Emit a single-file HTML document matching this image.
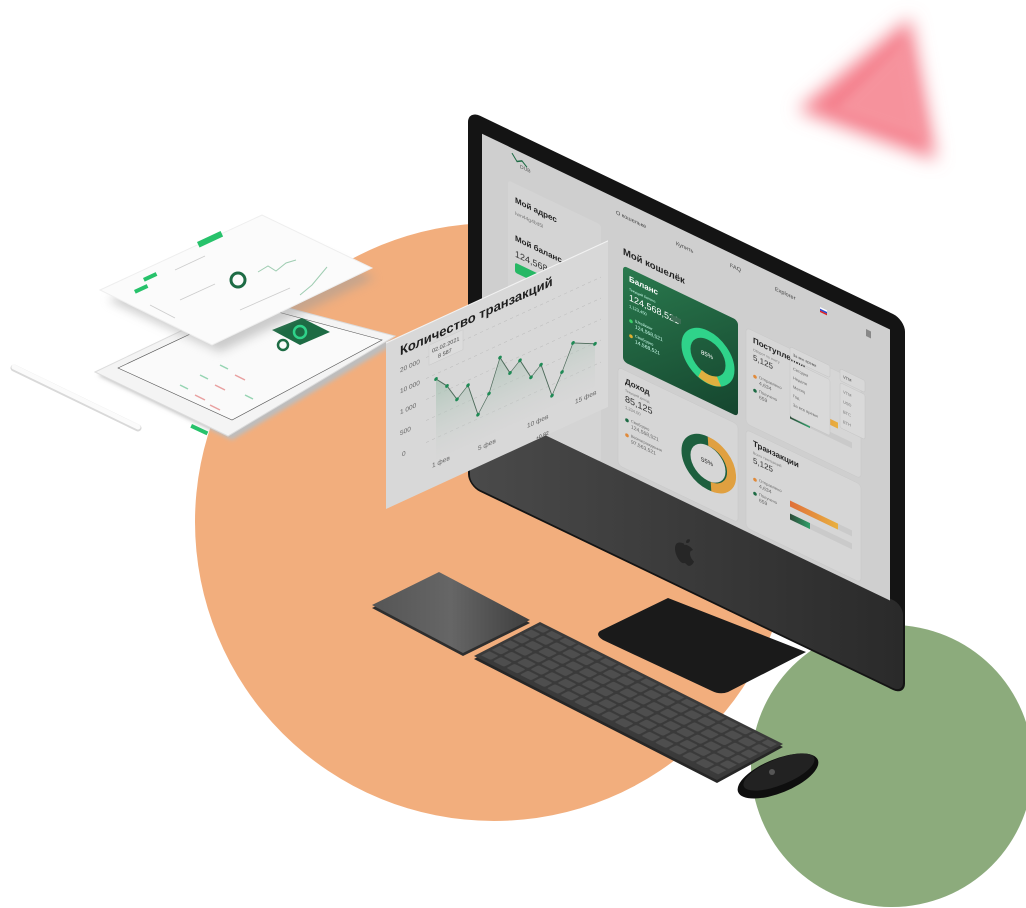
<!DOCTYPE html>
<html><head><meta charset="utf-8"><style>
html,body{margin:0;padding:0;background:#fff;width:1026px;height:908px;overflow:hidden}
svg{display:block}
text{font-family:"Liberation Sans","DejaVu Sans",sans-serif}
</style></head><body>
<svg width="1026" height="908" viewBox="0 0 1026 908" xmlns="http://www.w3.org/2000/svg">
<defs>
<filter id="blur12" x="-50%" y="-50%" width="200%" height="200%"><feGaussianBlur stdDeviation="9"/></filter>
<filter id="blur4" x="-50%" y="-50%" width="200%" height="200%"><feGaussianBlur stdDeviation="5"/></filter>
<filter id="sh" x="-20%" y="-20%" width="140%" height="140%"><feGaussianBlur stdDeviation="2"/></filter>
<linearGradient id="gc" x1="0" y1="0" x2="1" y2="1"><stop offset="0" stop-color="#2a7a4e"/><stop offset="1" stop-color="#15452e"/></linearGradient>
<linearGradient id="chin" x1="0" y1="0" x2="1" y2="0"><stop offset="0" stop-color="#4a4a4a"/><stop offset="0.5" stop-color="#3a3a3a"/><stop offset="1" stop-color="#2a2a2a"/></linearGradient>
<linearGradient id="ob" x1="0" y1="0" x2="1" y2="0"><stop offset="0" stop-color="#e0703a"/><stop offset="1" stop-color="#e8b040"/></linearGradient>
<linearGradient id="gb" x1="0" y1="0" x2="1" y2="0"><stop offset="0" stop-color="#2e4a38"/><stop offset="1" stop-color="#2fa06a"/></linearGradient>
<linearGradient id="tp" x1="0" y1="0" x2="1" y2="0"><stop offset="0" stop-color="#555"/><stop offset="0.5" stop-color="#666"/><stop offset="1" stop-color="#3e3e3e"/></linearGradient>
<linearGradient id="area" x1="0" y1="0" x2="0" y2="1"><stop offset="0" stop-color="#9fbfad" stop-opacity="0.7"/><stop offset="1" stop-color="#d5d5d5" stop-opacity="0.2"/></linearGradient>
<pattern id="keys" width="13.5" height="10.5" patternUnits="userSpaceOnUse"><rect x="1.2" y="1.2" width="11.1" height="8.1" rx="1.5" fill="#4e4e4e"/></pattern>
</defs>

<circle cx="494" cy="522" r="299" fill="#F2AE7D"/>
<circle cx="892" cy="766" r="141" fill="#8CAB7C"/>

<polygon points="798,110 910,18 936,160" fill="#F47F8C" filter="url(#blur12)"/>
<polygon points="835,110 905,40 925,140" fill="#F8A0A8" filter="url(#blur4)" opacity="0.6"/>

<g>
<line x1="14" y1="368" x2="138" y2="428" stroke="#d9d9d9" stroke-width="7" stroke-linecap="round"/>
<line x1="14" y1="367" x2="138" y2="427" stroke="#fbfbfb" stroke-width="5" stroke-linecap="round"/>
</g>

<polygon points="98,375 250,302 398,342 232,440" fill="#bdbdbd" filter="url(#sh)"/>
<polygon points="95,372 250,298 395,336 228,436" fill="#f4f4f4" stroke="#dcdcdc"/>
<polygon points="118,368 252,305 382,340 232,420" fill="#fafafa" stroke="#555" stroke-width="0.6"/>
<polygon points="272,330 302,318 330,332 300,345" fill="#1d6b44"/>
<circle cx="300" cy="332" r="6" fill="none" stroke="#2fd38a" stroke-width="2.5"/>
<circle cx="283" cy="345" r="5" fill="none" stroke="#1d6b44" stroke-width="2.5"/>
<g stroke="#e27b7b" stroke-width="1.5" opacity="0.7">
<line x1="195" y1="395" x2="205" y2="400"/><line x1="215" y1="385" x2="225" y2="390"/><line x1="235" y1="375" x2="245" y2="380"/><line x1="210" y1="405" x2="220" y2="410"/>
</g>
<g stroke="#6cc495" stroke-width="1.5" opacity="0.7">
<line x1="180" y1="385" x2="188" y2="389"/><line x1="200" y1="375" x2="208" y2="379"/><line x1="220" y1="365" x2="228" y2="369"/><line x1="245" y1="395" x2="253" y2="399"/>
</g>
<rect x="192" y="424" width="18" height="4" fill="#27c26b" transform="rotate(25 192 424)"/>

<polygon points="108,300 262,228 375,278 220,352" fill="#9b9b9b" opacity="0.5" filter="url(#blur4)"/>
<polygon points="100,290 262,215 372,268 212,345" fill="#fbfbfb" stroke="#eee"/>
<rect x="197" y="242" width="26" height="6" fill="#27c26b" transform="rotate(-25 197 242)"/>
<rect x="143" y="278" width="14" height="4" fill="#27c26b" transform="rotate(-25 143 278)"/>
<rect x="134" y="290" width="14" height="4" fill="#27c26b" transform="rotate(-25 134 290)"/>
<circle cx="238" cy="280" r="7" fill="none" stroke="#1d6b44" stroke-width="3"/>
<path d="M258 272 l10 -6 l8 5 l10 -8 l10 -3" stroke="#9fcdb2" fill="none"/>
<path d="M300 295 l12 -10 l15 -18" stroke="#9fcdb2" fill="none"/>
<g stroke="#ccc" stroke-width="0.8">
<line x1="175" y1="270" x2="205" y2="256"/><line x1="180" y1="300" x2="215" y2="284"/><line x1="240" y1="310" x2="290" y2="288"/><line x1="150" y1="305" x2="175" y2="318"/>
</g>

<path d="M600,631 L668,598 L806,652 L728,692 Q720,695 712,691 L603,640 Q595,635 600,631 Z" fill="#1a1a1a"/>

<g transform="matrix(1,0.48,0,1,468,110)">
<rect x="0" y="0" width="437" height="376" rx="12" fill="#141414"/>
<rect x="2" y="286" width="433" height="88" rx="10" fill="url(#chin)"/>
<rect x="14" y="17" width="408" height="271" fill="#cfcfcf"/>
<g transform="translate(216,338)">
<path d="M0,-8 C-6,-8 -9,-4 -9,1 C-9,7 -5,12 -2,12 C0,12 0,11 1,11 C2,11 3,12 4,12 C7,12 10,6 10,5 C7,4 6,1 6,-1 C6,-4 8,-5 9,-6 C7,-8 5,-8 3,-8 C2,-8 1,-7 0,-7 Z" fill="#262626"/>
<path d="M2,-10 C2,-13 4,-15 6,-15 C6,-12 4,-10 2,-10Z" fill="#262626"/>
</g>
<path d="M44,22 l5,6 l5,-3 l5,4" stroke="#1d6b44" stroke-width="1.3" fill="none"/>
<text x="52" y="33" font-size="5" fill="#555">DUB</text>
<rect x="40" y="51" width="93" height="237" rx="3" fill="#d4d4d4"/>
<text x="47" y="70" font-size="8" font-weight="bold" fill="#222">Мой адрес</text>
<text x="47" y="82" font-size="5" fill="#777">Iwn44g4bd5l</text>
<text x="47" y="108" font-size="8" font-weight="bold" fill="#222">Мой баланс</text>
<text x="47" y="124" font-size="9" fill="#333">124,568,521</text>
<rect x="47" y="130" width="40" height="10" rx="2" fill="#27b865"/>
<rect x="110" y="95" width="4" height="6" fill="none" stroke="#666" stroke-width="0.8"/>
<text x="148" y="33" font-size="5.5" fill="#444">О кошельке</text>
<text x="208" y="35" font-size="5.5" fill="#444">Купить</text>
<text x="262" y="31" font-size="5.5" fill="#444">FAQ</text>
<text x="307" y="33" font-size="5.5" fill="#444">Explorer</text>
<rect x="352" y="28" width="7" height="1.7" fill="#fff"/><rect x="352" y="29.7" width="7" height="1.7" fill="#2a4bd0"/><rect x="352" y="31.4" width="7" height="1.7" fill="#d22"/>
<rect x="398" y="28" width="5" height="7" fill="#888"/>
<text x="155" y="70" font-size="9.5" font-weight="bold" fill="#222">Мой кошелёк</text>
<rect x="155" y="81" width="115" height="96" rx="4" fill="url(#gc)"/>
<text x="161" y="94" font-size="8" font-weight="bold" fill="#fff">Баланс</text>
<text x="161" y="103" font-size="3.5" fill="#cfe">Текущий баланс</text>
<text x="161" y="113" font-size="9" fill="#fff">124,568,521</text>
<rect x="203" y="107" width="10" height="5" fill="#3d6e55"/>
<text x="161" y="120" font-size="4" fill="#cfe">1,123,450</text>
<circle cx="163" cy="133" r="1.8" fill="#3cd06a"/><text x="167" y="132" font-size="4" fill="#cfe">Штейкинг</text><text x="167" y="138" font-size="5" fill="#cfe">124,568,521</text>
<circle cx="163" cy="148" r="1.8" fill="#e0b030"/><text x="167" y="147" font-size="4" fill="#cfe">Свободно</text><text x="167" y="153" font-size="5" fill="#cfe">14,568,521</text>
<circle cx="240" cy="132" r="22" fill="none" stroke="#2fd38a" stroke-width="9"/>
<path d="M251,151 A22,22 0 0 1 232,152" fill="none" stroke="#e0b040" stroke-width="9"/>
<text x="233" y="132" font-size="6" fill="#fff">85%</text>
<rect x="150" y="185" width="120" height="98" rx="4" fill="#d6d6d6" stroke="#c8c8c8" stroke-width="0.5"/>
<text x="157" y="198" font-size="8" font-weight="bold" fill="#222">Доход</text>
<text x="157" y="206" font-size="3.5" fill="#777">Текущий доход</text>
<text x="157" y="216" font-size="9" fill="#333">85,125</text>
<text x="157" y="223" font-size="4" fill="#777">1,234.00</text>
<circle cx="159" cy="234" r="1.8" fill="#1d6b44"/><text x="163" y="234" font-size="4" fill="#666">Свободно</text><text x="163" y="240" font-size="5" fill="#666">124,568,521</text>
<circle cx="159" cy="249" r="1.8" fill="#e08a3a"/><text x="163" y="249" font-size="4" fill="#666">Вознаграждения</text><text x="163" y="255" font-size="5" fill="#666">97,563,521</text>
<circle cx="240" cy="238" r="22" fill="none" stroke="#1d5f3e" stroke-width="9"/>
<path d="M240,216 A22,22 0 0 1 243,260" fill="none" stroke="#e0a040" stroke-width="9"/>
<text x="233" y="239" font-size="6" fill="#222">55%</text>
<rect x="278" y="84" width="115" height="96" rx="4" fill="#d6d6d6" stroke="#c8c8c8" stroke-width="0.5"/>
<text x="285" y="96" font-size="8" font-weight="bold" fill="#222">Поступления</text>
<text x="285" y="104" font-size="3.5" fill="#777">Оборот по счету</text>
<text x="285" y="113" font-size="8" fill="#333">5,125</text>
<circle cx="287" cy="129" r="1.8" fill="#e08a3a"/><text x="291" y="129" font-size="4" fill="#666">Отправлено</text><text x="291" y="135" font-size="5" fill="#666">4,634</text>
<circle cx="287" cy="143" r="1.8" fill="#1d6b44"/><text x="291" y="143" font-size="4" fill="#666">Получено</text><text x="291" y="149" font-size="5" fill="#666">659</text>
<rect x="322" y="135" width="48" height="6" fill="url(#ob)"/>
<rect x="322" y="148" width="20" height="6" fill="url(#gb)"/>
<rect x="342" y="148" width="42" height="6" fill="#cacaca"/>
<rect x="278" y="186" width="115" height="98" rx="4" fill="#d6d6d6" stroke="#c8c8c8" stroke-width="0.5"/>
<text x="285" y="199" font-size="8" font-weight="bold" fill="#222">Транзакции</text>
<text x="285" y="207" font-size="3.5" fill="#777">Всего транзакций</text>
<text x="285" y="216" font-size="8" fill="#333">5,125</text>
<circle cx="287" cy="232" r="1.8" fill="#e08a3a"/><text x="291" y="232" font-size="4" fill="#666">Отправлено</text><text x="291" y="238" font-size="5" fill="#666">4,634</text>
<circle cx="287" cy="246" r="1.8" fill="#1d6b44"/><text x="291" y="246" font-size="4" fill="#666">Получено</text><text x="291" y="252" font-size="5" fill="#666">659</text>
<rect x="322" y="236" width="48" height="6" fill="url(#ob)"/><rect x="370" y="236" width="14" height="6" fill="#cacaca"/>
<rect x="322" y="249" width="20" height="6" fill="url(#gb)"/><rect x="342" y="249" width="42" height="6" fill="#cacaca"/>
<rect x="322" y="82" width="40" height="12" rx="2" fill="#d8d8d8" stroke="#c4c4c4" stroke-width="0.5"/>
<text x="325" y="90" font-size="3.8" fill="#444">За все время</text>
<rect x="322" y="96" width="40" height="56" rx="2" fill="#d9d9d9" stroke="#c4c4c4" stroke-width="0.5"/>
<text x="325" y="104" font-size="4" fill="#666">Сегодня</text><text x="325" y="113" font-size="4" fill="#666">Неделя</text><text x="325" y="122" font-size="4" fill="#666">Месяц</text><text x="325" y="131" font-size="4" fill="#666">Год</text><text x="325" y="140" font-size="4" fill="#666">За все время</text>
<rect x="372" y="80" width="25" height="12" rx="2" fill="#d8d8d8" stroke="#c4c4c4" stroke-width="0.5"/>
<text x="375" y="88" font-size="4" fill="#444">VTM</text>
<rect x="372" y="94" width="25" height="45" rx="2" fill="#d9d9d9" stroke="#c4c4c4" stroke-width="0.5"/>
<text x="375" y="103" font-size="4" fill="#777">VTM</text><text x="375" y="113" font-size="4" fill="#777">USD</text><text x="375" y="123" font-size="4" fill="#777">BTC</text><text x="375" y="133" font-size="4" fill="#777">ETH</text>
</g>

<g transform="matrix(1,-0.46,0,1,386,343)">
<rect x="0" y="0" width="222" height="166" fill="#d8d8d8"/>
<line x1="0" y1="0" x2="222" y2="0" stroke="#f2f2f2" stroke-width="1.2"/>
<text x="14" y="19" font-size="13" font-weight="bold" fill="#1e1e1e">Количество транзакций</text>
<g stroke="#bdbdbd" stroke-width="0.6" stroke-dasharray="3,3">
<line x1="40" y1="33" x2="215" y2="33"/><line x1="40" y1="54" x2="215" y2="54"/><line x1="40" y1="75" x2="215" y2="75"/><line x1="40" y1="96" x2="215" y2="96"/><line x1="40" y1="118" x2="215" y2="118"/>
</g>
<g font-size="6.5" fill="#666">
<text x="14" y="36">20 000</text><text x="14" y="57">10 000</text><text x="14" y="78">1 000</text><text x="14" y="99">500</text><text x="16" y="121">0</text>
<text x="46" y="146">1 фев</text><text x="92" y="150">5 фев</text><text x="141" y="150">10 фев</text><text x="189" y="148">15 фев</text>
</g>
<rect x="43" y="22" width="34" height="20" fill="#dcdcdc" stroke="#c8c8c8" stroke-width="0.5"/>
<text x="46" y="31" font-size="5.5" fill="#444">02.02.2021</text><text x="52" y="39" font-size="5.5" fill="#444">8 587</text>
<path d="M50,59 L61,71 L71,89 L82,80 L92,114 L103,98 L114,67 L124,87 L134,79 L145,101 L155,93 L166,129 L176,110 L187,86 L209,97 L209,140 L50,140 Z" fill="url(#area)"/>
<polyline points="50,59 61,71 71,89 82,80 92,114 103,98 114,67 124,87 134,79 145,101 155,93 166,129 176,110 187,86 209,97" fill="none" stroke="#4d6a5a" stroke-width="0.8"/>
<g fill="#1f8a55">
<circle cx="50" cy="59" r="1.8"/><circle cx="61" cy="71" r="1.8"/><circle cx="71" cy="89" r="1.8"/><circle cx="82" cy="80" r="1.8"/><circle cx="92" cy="114" r="1.8"/><circle cx="103" cy="98" r="1.8"/><circle cx="114" cy="67" r="1.8"/><circle cx="124" cy="87" r="1.8"/><circle cx="134" cy="79" r="1.8"/><circle cx="145" cy="101" r="1.8"/><circle cx="155" cy="93" r="1.8"/><circle cx="166" cy="129" r="1.8"/><circle cx="176" cy="110" r="1.8"/><circle cx="187" cy="86" r="1.8"/><circle cx="209" cy="97" r="1.8"/>
</g>
<text x="150" y="166" font-size="5" fill="#333">+0.82</text>
</g>

<polygon points="372,608 439,575 530,623 463,656" fill="#2e2e2e"/>
<polygon points="372,605 439,572 530,620 463,653" fill="url(#tp)"/>

<polygon points="474,659 540,625 783,747 717,783" fill="#262626"/>
<polygon points="474,656 540,622 783,744 717,780" fill="#3a3a3a"/>
<g transform="matrix(1,0.502,-1,0.515,540,622)">
<rect x="3" y="3" width="237" height="61" fill="url(#keys)"/>
</g>

<ellipse cx="778" cy="776" rx="43" ry="17" transform="rotate(-22 778 776)" fill="#0e0e0e"/>
<ellipse cx="779" cy="772" rx="38" ry="13" transform="rotate(-22 779 772)" fill="#222"/>
<circle cx="772" cy="772" r="3" fill="#555"/>
</svg>
</body></html>
